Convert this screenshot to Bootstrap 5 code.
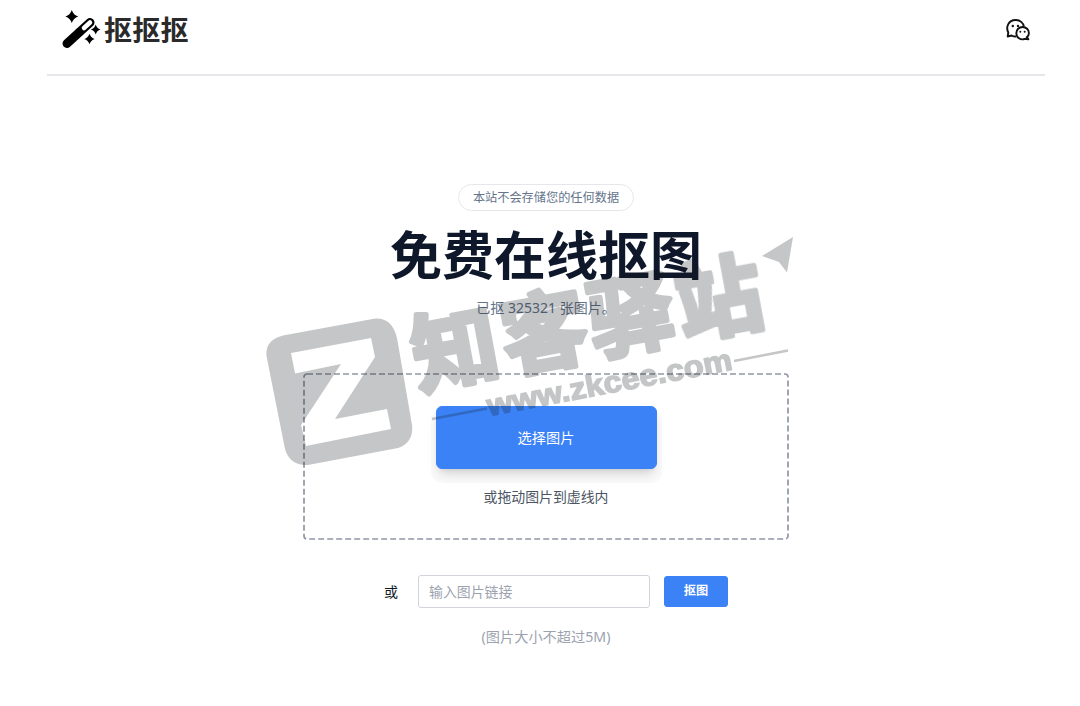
<!DOCTYPE html>
<html lang="zh-CN">
<head>
<meta charset="utf-8">
<meta name="viewport" content="width=device-width, initial-scale=1">
<title>抠抠抠 - 免费在线抠图</title>
<link rel="stylesheet" href="https://cdn.jsdelivr.net/npm/bootstrap@5.3.0/dist/css/bootstrap.min.css">
<style>
body{font-family:"Noto Sans","Noto Sans CJK SC",sans-serif;font-size:14px;color:#111827;overflow:hidden;height:706px}
.shell{width:998px;margin-left:47px}
.topbar{height:76px;border-bottom:2px solid #e5e7eb;padding:0 15px 14px 15px}
.brand-name{font-size:28px;font-weight:700;line-height:40px;color:#2a2a2a;margin-left:4px;letter-spacing:.3px}
.notice{margin-top:108px;height:27px;line-height:25px;border:1px solid #e5e7eb;font-size:12.2px;color:#64748b;padding:0 14px}
.headline{font-size:52px;font-weight:700;line-height:60px;color:#0f172a;margin:14px 0 0}
.count{color:#64748b;line-height:20px;margin-top:13px}
.dropzone{width:486px;height:167px;margin-top:55px;padding-top:33px}
.dropzone .frame{left:0;top:0}
.pick{width:221px;height:63px;border-radius:6px;font-size:14.2px;box-shadow:0 8px 12px -3px rgba(0,0,0,.14),0 4px 6px -4px rgba(0,0,0,.1),0 9px 0 5px rgba(0,0,0,.02)}
.btn-primary{--bs-btn-bg:#3b82f6;--bs-btn-border-color:#3b82f6}
.hint{color:#4b5563;line-height:20px;margin-top:18px;font-size:13.9px}
.linkrow{margin-top:35px;width:344px;margin-left:20px}
.linkrow .form-control{width:232px;height:33px;border-color:#d1d5db;border-radius:3px;font-size:13.9px;padding:0 10px;margin-left:20px}
.form-control::placeholder{color:#9ca3af}
.go{width:64px;height:31px;font-size:12.2px;font-weight:700;border-radius:3px;margin-left:14px}
.limit{color:#9ca3af;line-height:20px;margin-top:19px;font-size:14.2px}
.watermark{left:0;top:0;pointer-events:none;z-index:5}
</style>
</head>
<body class="position-relative bg-white">
<div class="shell">
  <header class="topbar d-flex align-items-center justify-content-between">
    <div class="d-flex align-items-center">
      <svg width="38" height="40" viewBox="0 0 38 40" overflow="visible">
        <path d="M5 33.500 28 12.500" stroke="#000" stroke-width="9" stroke-linecap="round"/>
        <path d="M22 18 28 12.500" stroke="#fff" stroke-width="4.600" stroke-linecap="round"/>
        <path d="M15.500 18 21.500 24 19.500 26 13.500 20Z"/>
        <path d="M9.800 0Q11.400 5 16.200 6.500 11.400 8 9.800 13 8.200 8 3.400 6.500 8.200 5 9.800 0ZM33.700 14.500Q34.900 18.300 38.500 19.500 34.900 20.700 33.700 24.500 32.500 20.700 28.900 19.500 32.500 18.300 33.700 14.500ZM27.500 23.700Q28.800 27.700 32.700 29 28.800 30.300 27.500 34.300 26.200 30.300 22.300 29 26.200 27.700 27.500 23.700Z"/>
      </svg>
      <span class="brand-name">抠抠抠</span>
    </div>
    <svg width="24" height="24" viewBox="0 0 24 24" fill="none" stroke="#111" stroke-width="1.900" stroke-linejoin="round">
      <path d="M10.500 18.500C8.800 18.700 7 18.300 5.500 17.500L1.700 18.500 2.300 14.500C-.4 9.500 2.200 2.200 9.500 2 14.200 1.800 17.300 5 17.900 8.600"/>
      <path d="M20.900 19.100 22.400 21.300 18.900 20.800C14.500 22.600 10.300 19.500 10.300 15.300 10.300 11.700 13.100 9 16.600 9 20.200 9 22.900 11.800 22.900 15 22.900 16.700 22.100 18.300 20.900 19.100Z"/>
      <g fill="#111" stroke="none"><circle cx="6.800" cy="8" r="1.200"/><circle cx="12" cy="8" r="1.200"/><circle cx="14.300" cy="13.700" r="1"/><circle cx="18.700" cy="13.700" r="1"/></g>
    </svg>
  </header>
  <main class="d-flex flex-column align-items-center">
    <div class="notice rounded-pill">本站不会存储您的任何数据</div>
    <h1 class="headline">免费在线抠图</h1>
    <div class="count">已抠 325321 张图片。</div>
    <section class="dropzone position-relative d-flex flex-column align-items-center">
      <svg class="frame position-absolute" width="486" height="167"><rect x="1" y="1" width="484" height="165" rx="3" fill="none" stroke="#9096a5" stroke-width="1.700" stroke-dasharray="6 3"/></svg>
      <button class="btn btn-primary pick position-relative">选择图片</button>
      <div class="hint">或拖动图片到虚线内</div>
    </section>
    <div class="linkrow d-flex align-items-center">
      <span>或</span>
      <input class="form-control flex-shrink-0" type="text" placeholder="输入图片链接">
      <button class="btn btn-primary go p-0 flex-shrink-0">抠图</button>
    </div>
    <div class="limit">(图片大小不超过5M)</div>
  </main>
</div>
<svg class="watermark position-absolute" width="1080" height="706" viewBox="0 0 1080 706">
  <g opacity=".25" fill="#14181c" stroke="#14181c" stroke-width="0">
    <path fill-rule="evenodd" d="M283 335.500 374 318.700Q392 317 397 338L412 425Q414 442 398 448L308 465Q290 466 285 449L266.500 356Q265 340 283 335.500ZM291 353 295 373.500 341 364 301 425 306 446 391 429 387 409 335 419 375 357 371 338Z"/>
    <g font-family="Noto Sans CJK SC, sans-serif" font-weight="700" font-size="86" stroke-width="5" text-anchor="middle" stroke-linejoin="round">
      <text transform="translate(455 349) rotate(-10.5)" y="32">知</text>
      <text transform="translate(544 332) rotate(-10.5)" y="32">客</text>
      <text transform="translate(631 315) rotate(-10.5)" y="32">驿</text>
      <text transform="translate(719 298) rotate(-10.5)" y="32">站</text>
    </g>
    <text transform="translate(489 416) rotate(-10.800)" font-family="Liberation Sans, sans-serif" font-weight="700" font-size="30" stroke-width="1.500" textLength="249" lengthAdjust="spacingAndGlyphs">www.zkcee.com</text>
    <path d="M432 419 487 408.500M734 361 788 350.500" stroke-width="2.500"/>
    <path d="M793 237 762 256 779 262 787 272.500Z"/>
  </g>
</svg>
<script src="https://cdn.jsdelivr.net/npm/bootstrap@5.3.0/dist/js/bootstrap.bundle.min.js"></script>
</body>
</html>
